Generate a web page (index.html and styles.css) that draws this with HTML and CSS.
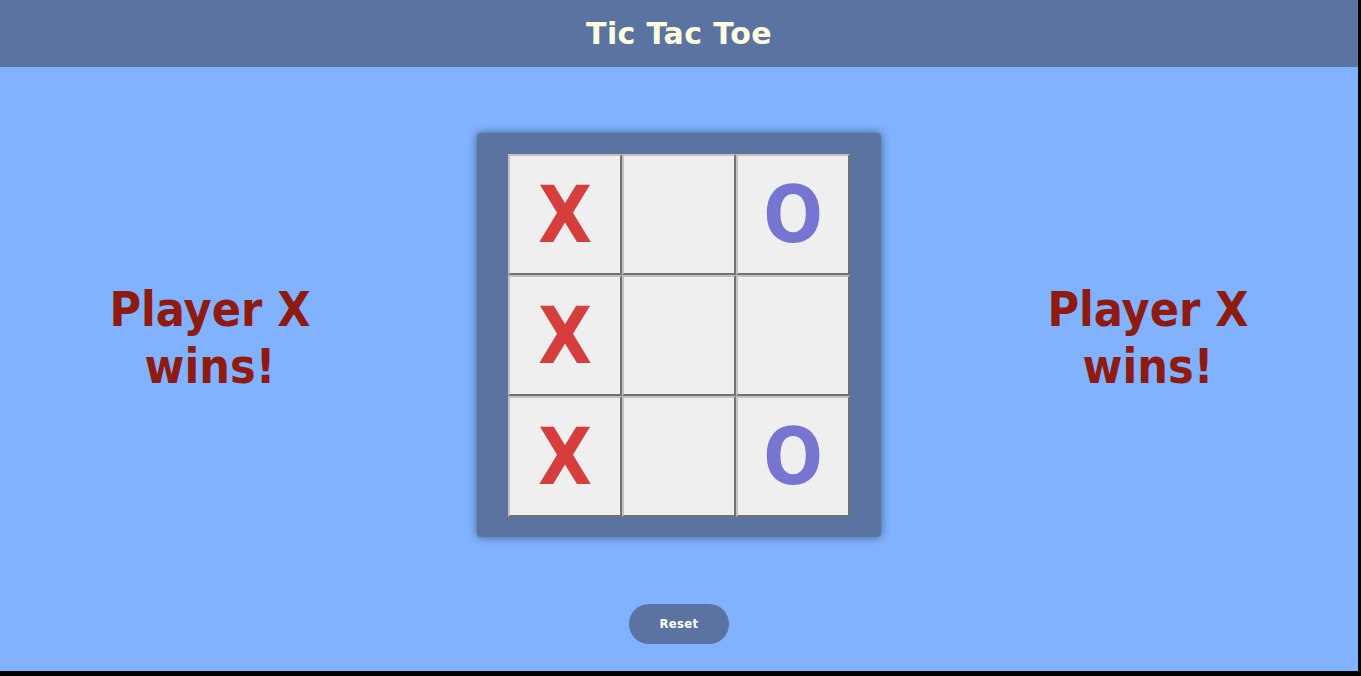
FILE: index.html
```html
<!DOCTYPE html>
<html>
<head>
<meta charset="utf-8">
<title>Tic Tac Toe</title>
<link rel="stylesheet" href="styles.css">
</head>
<body>
<div class="app">
  <header class="header"><h1 class="title">Tic Tac Toe</h1></header>
  <main class="main">
    <div class="status">Player X<br>wins!</div>
    <div class="board">
      <button class="cell x">X</button>
      <button class="cell"></button>
      <button class="cell o">O</button>
      <button class="cell x">X</button>
      <button class="cell"></button>
      <button class="cell"></button>
      <button class="cell x">X</button>
      <button class="cell"></button>
      <button class="cell o">O</button>
    </div>
    <div class="status">Player X<br>wins!</div>
  </main>
  <div class="actions"><button class="reset">Reset</button></div>
</div>
</body>
</html>
```
FILE: styles.css
```css
html, body {
  margin: 0;
  padding: 0;
  background: #000;
}
.app {
  width: 1358px;
  height: 671px;
  background: #80b2ff;
  font-family: "DejaVu Sans", sans-serif;
  overflow: hidden;
}
.header {
  height: 67px;
  background: #5a73a0;
  display: flex;
  align-items: center;
  justify-content: center;
}
.title {
  margin: 0;
  font-size: 30px;
  letter-spacing: 0.4px;
  font-weight: bold;
  color: #ffffe0;
}
.main {
  display: flex;
  justify-content: center;
  align-items: center;
  gap: 117px;
  margin-top: 66px;
}
.status {
  width: 300px;
  padding-top: 6px;
  text-align: center;
  font-size: 48px;
  line-height: 57px;
  font-weight: bold;
  font-stretch: condensed;
  color: #8e1a10;
}
.board {
  width: 404px;
  height: 404px;
  box-sizing: border-box;
  padding: 21px 31px 20px;
  background: #5a73a0;
  border-radius: 4px;
  box-shadow: 0 0 8px rgba(0, 0, 0, 0.5);
  display: grid;
  grid-template-columns: repeat(3, 114px);
  grid-template-rows: repeat(3, 121px);
}
.cell {
  margin: 0;
  padding: 0;
  background: #efefef;
  border-style: solid;
  border-width: 2px;
  border-color: #c4c1c1 #717171 #717171 #c4c1c1;
  font-family: "DejaVu Sans", sans-serif;
  font-size: 78px;
  font-stretch: condensed;
  font-weight: bold;
  line-height: 1;
  display: flex;
  align-items: center;
  justify-content: center;
}
.cell.x { color: #d63d3d; }
.cell.o { color: #7676d2; }
.actions {
  display: flex;
  justify-content: center;
  margin-top: 67px;
}
.reset {
  width: 100px;
  height: 40px;
  border: none;
  border-radius: 20px;
  background: #5a73a0;
  color: #fff;
  font-family: "DejaVu Sans", sans-serif;
  font-weight: bold;
  font-size: 13px;
  font-stretch: condensed;
  letter-spacing: 0.3px;
  padding: 0 0 2px;
}
```
